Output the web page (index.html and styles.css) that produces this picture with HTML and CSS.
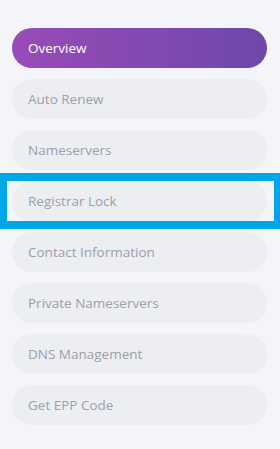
FILE: index.html
```html
<!DOCTYPE html>
<html lang="en">
  <head>
    <meta charset="UTF-8" />
    <meta name="viewport" content="width=device-width, initial-scale=1.0" />
    <title>Domain Settings</title>
    <link rel="stylesheet" href="styles.css">
  </head>
  <body>
    <nav class="side-menu">
      <a class="menu-item active" href="#">Overview</a>
      <a class="menu-item" href="#">Auto Renew</a>
      <a class="menu-item" href="#">Nameservers</a>
      <div class="highlight">
        <a class="menu-item" href="#">Registrar Lock</a>
      </div>
      <a class="menu-item" href="#">Contact Information</a>
      <a class="menu-item" href="#">Private Nameservers</a>
      <a class="menu-item" href="#">DNS Management</a>
      <a class="menu-item" href="#">Get EPP Code</a>
    </nav>
  </body>
</html>
```

FILE: styles.css
```css
body {
  margin: 0;
  background: #f4f5f9;
  font-family: "Open Sans", sans-serif;
}
.side-menu {
  display: flex;
  flex-direction: column;
  gap: 11px;
  padding: 28px 13px 20px 12px;
}
.menu-item {
  display: flex;
  align-items: center;
  height: 40px;
  padding: 0 16px;
  border-radius: 20px;
  background: #edeef2;
  color: #9c9eab;
  font-size: 13.5px;
  text-decoration: none;
}
.menu-item.active {
  background: linear-gradient(90deg, #9a4bb8 0%, #6d48a8 100%);
  color: #fff;
  font-weight: 500;
}
.highlight {
  margin: -8px -13px -8px -12px;
  border: solid #00a6e7;
  border-width: 8px 6px 8px 7px;
  padding: 0 7px 0 5px;
}
```
